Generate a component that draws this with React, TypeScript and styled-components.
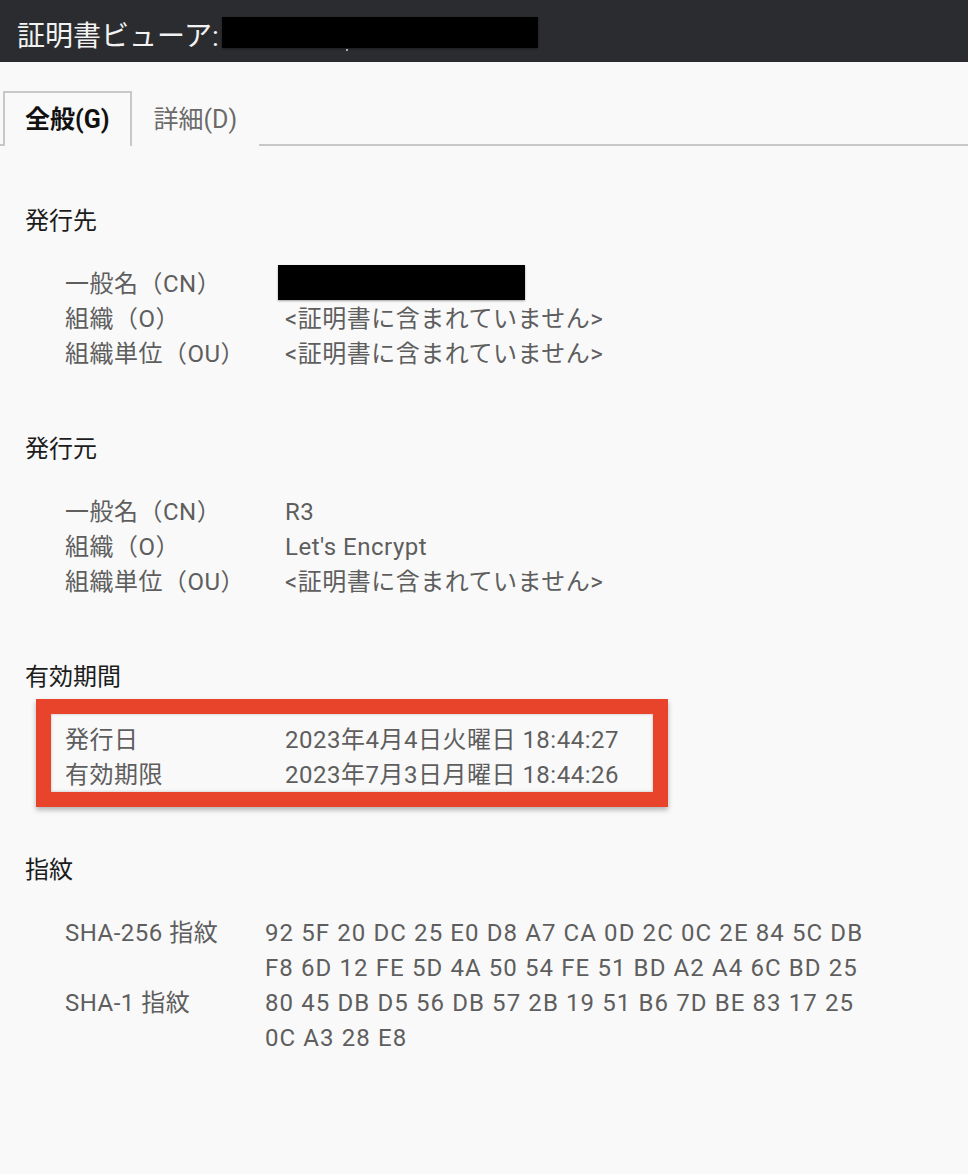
import React from "react";
import styled, { createGlobalStyle } from "styled-components";

const GlobalStyle = createGlobalStyle`
  html, body {
    margin: 0;
    padding: 0;
    background: #f9f9f9;
  }
  body {
    font-family: Roboto, "Noto Sans CJK JP", "Noto Sans", sans-serif;
    -webkit-font-smoothing: antialiased;
  }
`;

const Page = styled.div`
  width: 968px;
  min-height: 1174px;
  background: #f9f9f9;
`;

const Header = styled.header`
  height: 62px;
  box-sizing: border-box;
  padding: 12px 0 0 17px;
  background: #2b2c30;
  display: flex;
  align-items: center;
`;

const Title = styled.h1`
  margin: 0;
  font-size: 28px;
  font-weight: 400;
  line-height: 1;
  color: #f2f2f2;
`;

const Redaction = styled.span<{ $w: number; $h: number }>`
  position: relative;
  display: inline-block;
  width: ${(p) => p.$w}px;
  height: ${(p) => p.$h}px;
  background: #000;
  box-shadow: 0 1px 2px rgba(0, 0, 0, 0.35);
`;

const HeaderRedaction = styled(Redaction)`
  margin: -9px 0 0 3px;
`;

const Speck = styled.span`
  position: absolute;
  left: 124px;
  bottom: -3px;
  width: 2px;
  height: 2px;
  background: #aaa;
`;

const TabStrip = styled.nav`
  margin-top: 29px;
  padding-left: 3px;
  display: flex;
  border-bottom: 2px solid #c8c8c8;
`;

const Tab = styled.button<{ $active?: boolean }>`
  appearance: none;
  margin: 0 0 -2px 0;
  padding: 0 20px;
  height: 55px;
  box-sizing: border-box;
  border: 2px solid ${(p) => (p.$active ? "#c8c8c8" : "transparent")};
  border-bottom: none;
  background: #f9f9f9;
  font-family: inherit;
  font-size: 25px;
  font-weight: ${(p) => (p.$active ? 700 : 400)};
  color: ${(p) => (p.$active ? "#111" : "#6a6a6a")};
  line-height: 1;
  cursor: pointer;
`;

const Content = styled.main`
  padding: 58px 0 0 25px;
  display: flex;
  flex-direction: column;
  gap: 60px;
`;

const Section = styled.section`
  display: flex;
  flex-direction: column;
  gap: 28px;
`;

const Heading = styled.h2`
  margin: 0;
  font-size: 24px;
  font-weight: 400;
  line-height: 35px;
  color: #1c1c1c;
`;

const Rows = styled.div`
  position: relative;
  padding-left: 40px;
  display: flex;
  flex-direction: column;
`;

const Row = styled.div<{ $label: number }>`
  display: grid;
  grid-template-columns: ${(p) => p.$label}px 1fr;
  font-size: 24px;
  line-height: 35px;
  letter-spacing: 0.5px;
  color: #5e5e5e;
`;

const Value = styled.div<{ $hex?: boolean }>`
  display: flex;
  flex-direction: column;
  align-items: flex-start;
  letter-spacing: ${(p) => (p.$hex ? "1.1px" : "inherit")};
`;

const CellRedaction = styled(Redaction)`
  margin: -2px 0 0 -7px;
`;

const Highlight = styled.div`
  position: absolute;
  left: 11px;
  top: -24px;
  width: 632px;
  height: 108px;
  box-sizing: border-box;
  border: 15px solid #e8432b;
  box-shadow: 0 3px 5px rgba(0, 0, 0, 0.28), inset 0 0 3px rgba(0, 0, 0, 0.25);
  pointer-events: none;
`;

type Item = { label: string; value?: string[]; redacted?: boolean };

const NOT_INCLUDED = "<証明書に含まれていません>";

const subject: Item[] = [
  { label: "一般名（CN）", redacted: true },
  { label: "組織（O）", value: [NOT_INCLUDED] },
  { label: "組織単位（OU）", value: [NOT_INCLUDED] },
];

const issuer: Item[] = [
  { label: "一般名（CN）", value: ["R3"] },
  { label: "組織（O）", value: ["Let's Encrypt"] },
  { label: "組織単位（OU）", value: [NOT_INCLUDED] },
];

const validity: Item[] = [
  { label: "発行日", value: ["2023年4月4日火曜日 18:44:27"] },
  { label: "有効期限", value: ["2023年7月3日月曜日 18:44:26"] },
];

const fingerprints: Item[] = [
  {
    label: "SHA-256 指紋",
    value: [
      "92 5F 20 DC 25 E0 D8 A7 CA 0D 2C 0C 2E 84 5C DB",
      "F8 6D 12 FE 5D 4A 50 54 FE 51 BD A2 A4 6C BD 25",
    ],
  },
  {
    label: "SHA-1 指紋",
    value: ["80 45 DB D5 56 DB 57 2B 19 51 B6 7D BE 83 17 25", "0C A3 28 E8"],
  },
];

function InfoSection({
  title,
  items,
  labelWidth,
  highlighted,
  hex,
}: {
  title: string;
  items: Item[];
  labelWidth: number;
  highlighted?: boolean;
  hex?: boolean;
}) {
  return (
    <Section>
      <Heading>{title}</Heading>
      <Rows>
        {items.map((it) => (
          <Row key={it.label} $label={labelWidth}>
            <span>{it.label}</span>
            <Value $hex={hex}>
              {it.redacted ? (
                <CellRedaction $w={247} $h={35} />
              ) : (
                it.value?.map((line) => <span key={line}>{line}</span>)
              )}
            </Value>
          </Row>
        ))}
        {highlighted && <Highlight />}
      </Rows>
    </Section>
  );
}

export default function App() {
  return (
    <Page>
      <GlobalStyle />
      <Header>
        <Title>証明書ビューア:</Title>
        <HeaderRedaction $w={316} $h={31}>
          <Speck />
        </HeaderRedaction>
      </Header>
      <TabStrip>
        <Tab $active>全般(G)</Tab>
        <Tab>詳細(D)</Tab>
      </TabStrip>
      <Content>
        <InfoSection title="発行先" items={subject} labelWidth={220} />
        <InfoSection title="発行元" items={issuer} labelWidth={220} />
        <InfoSection title="有効期間" items={validity} labelWidth={220} highlighted />
        <InfoSection title="指紋" items={fingerprints} labelWidth={200} hex />
      </Content>
    </Page>
  );
}
